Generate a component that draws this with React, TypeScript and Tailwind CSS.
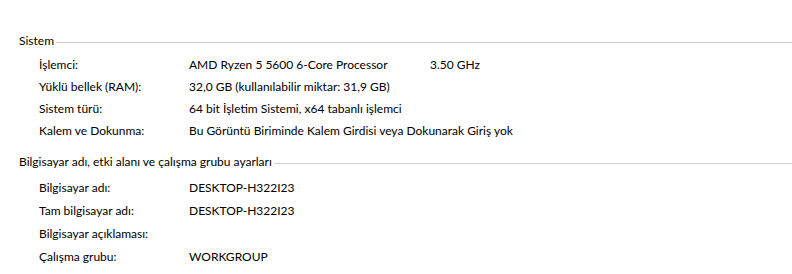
import React from "react";

function Header({ title }: { title: string }) {
  return (
    <div className="flex items-center h-[16px] leading-[16px]">
      <span className="whitespace-nowrap">{title}</span>
      <div className="flex-1 h-px bg-[#d0d0d0] ml-[2px] mt-[2px]" />
    </div>
  );
}

function Row({ label, value, extra, h }: { label: string; value?: string; extra?: string; h: string }) {
  return (
    <div className={`flex items-center pl-[20px] leading-[16px] ${h}`}>
      <span className="w-[150px] whitespace-nowrap">{label}</span>
      <span className="w-[241px] whitespace-nowrap">{value}</span>
      {extra && <span className="whitespace-nowrap">{extra}</span>}
    </div>
  );
}

export default function App() {
  return (
    <div
      className="w-[792px] h-[274px] bg-white text-black text-[12px] overflow-hidden pl-[19px]"
      style={{ fontFamily: 'Lato, "Noto Sans", sans-serif' }}
    >
      <div className="h-[33px]" />
      <Header title="Sistem" />
      <div className="h-[5px]" />
      <Row h="h-[22px]" label="İşlemci:" value="AMD Ryzen 5 5600 6-Core Processor" extra="3.50 GHz" />
      <Row h="h-[22px]" label="Yüklü bellek (RAM):" value="32,0 GB (kullanılabilir miktar: 31,9 GB)" />
      <Row h="h-[22px]" label="Sistem türü:" value="64 bit İşletim Sistemi, x64 tabanlı işlemci" />
      <Row h="h-[22px]" label="Kalem ve Dokunma:" value="Bu Görüntü Biriminde Kalem Girdisi veya Dokunarak Giriş yok" />
      <div className="h-[12px]" />
      <Header title="Bilgisayar adı, etki alanı ve çalışma grubu ayarları" />
      <div className="h-[6px]" />
      <Row h="h-[23px]" label="Bilgisayar adı:" value="DESKTOP-H322I23" />
      <Row h="h-[23px]" label="Tam bilgisayar adı:" value="DESKTOP-H322I23" />
      <Row h="h-[23px]" label="Bilgisayar açıklaması:" />
      <Row h="h-[23px]" label="Çalışma grubu:" value="WORKGROUP" />
    </div>
  );
}
